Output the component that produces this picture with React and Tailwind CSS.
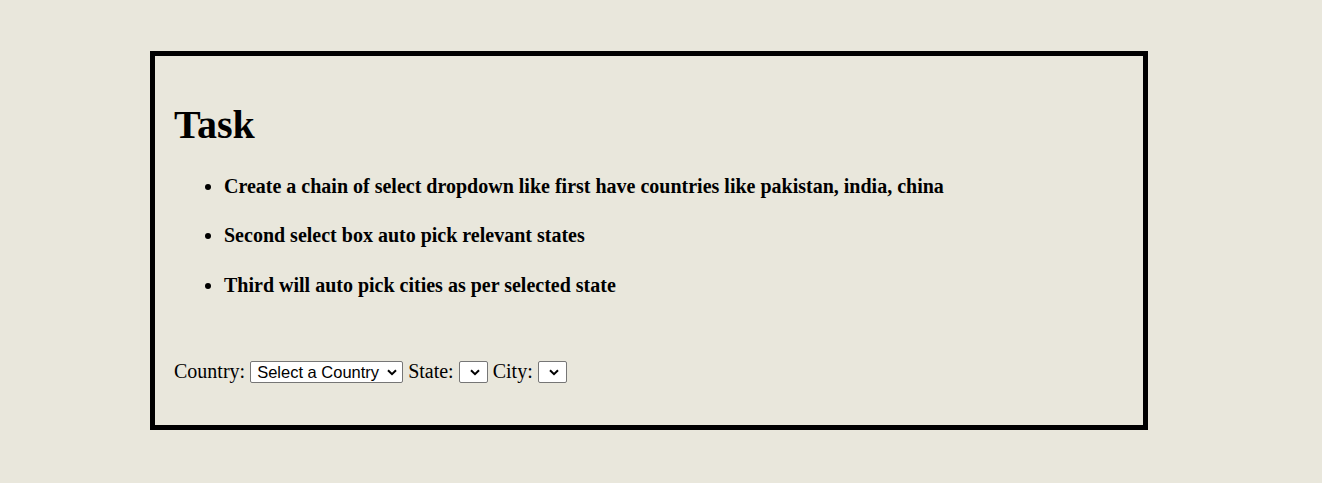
function Chevron({ right }) {
  return (
    <svg className={`absolute ${right} top-[8px] pointer-events-none`} width="10" height="7" viewBox="0 0 10 7" fill="none">
      <path d="M1 1.2 L5 5.2 L9 1.2" stroke="#000" strokeWidth="2" strokeLinecap="butt" strokeLinejoin="miter" />
    </svg>
  );
}

function Select({ width, right, children }) {
  return (
    <span className="relative inline-flex ml-[5px]">
      <select
        className={`appearance-none h-[22px] ${width} border border-[#767676] bg-white rounded-[2px] text-[16.5px] pl-[6px] pr-[20px] leading-[20px]`}
        style={{ fontFamily: '"Liberation Sans", Arial, sans-serif' }}
      >
        {children}
      </select>
      <Chevron right={right} />
    </span>
  );
}

export default function App() {
  return (
    <div className="min-h-[483px] bg-[#e9e7dc] pt-[51px] pl-[150px]" style={{ fontFamily: '"Liberation Serif", "Times New Roman", serif' }}>
      <div className="w-[998px] h-[379px] border-[5px] border-black px-[19px] text-black">
        <h1 className="text-[40px] font-bold leading-[46px] mt-[46px]">Task</h1>
        <ul className="list-disc pl-[50px] mt-[27px] text-[20px] font-bold">
          <li className="leading-[23px]">Create a chain of select dropdown like first have countries like pakistan, india, china</li>
          <li className="leading-[23px] mt-[26px]">Second select box auto pick relevant states</li>
          <li className="leading-[23px] mt-[27px]">Third will auto pick cities as per selected state</li>
        </ul>
        <div className="mt-[63px] flex items-center text-[20px] leading-[23px]">
          <span>Country:</span>
          <Select width="w-[153px]" right="right-[6px]">
            <option>Select a Country</option>
          </Select>
          <span className="ml-[5px]">State:</span>
          <Select width="w-[29px]" right="right-[8px]" />
          <span className="ml-[5px]">City:</span>
          <Select width="w-[29px]" right="right-[8px]" />
        </div>
      </div>
    </div>
  );
}
